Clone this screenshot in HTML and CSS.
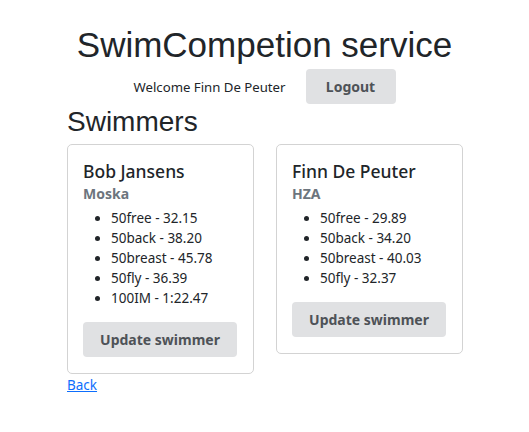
FILE: index.html
```html
<!DOCTYPE html>
<html>
<head>
<meta charset="utf-8">
<link rel="stylesheet" href="styles.css">
</head>
<body>
<div class="page">
  <h1 class="title">SwimCompetion service</h1>
  <div class="welcome">
    <span class="welcome-text">Welcome Finn De Peuter</span>
    <button class="btn">Logout</button>
  </div>
  <h2 class="section">Swimmers</h2>
  <div class="cards">
    <div class="card">
      <h3 class="card-title">Bob Jansens</h3>
      <div class="club">Moska</div>
      <ul class="times">
        <li>50free - 32.15</li>
        <li>50back - 38.20</li>
        <li>50breast - 45.78</li>
        <li>50fly - 36.39</li>
        <li>100IM - 1:22.47</li>
      </ul>
      <button class="btn btn-card">Update swimmer</button>
    </div>
    <div class="card">
      <h3 class="card-title">Finn De Peuter</h3>
      <div class="club">HZA</div>
      <ul class="times">
        <li>50free - 29.89</li>
        <li>50back - 34.20</li>
        <li>50breast - 40.03</li>
        <li>50fly - 32.37</li>
      </ul>
      <button class="btn btn-card">Update swimmer</button>
    </div>
  </div>
  <a class="back" href="#">Back</a>
</div>
</body>
</html>
```
FILE: styles.css
```css
html, body {
  margin: 0;
  padding: 0;
  background: #fff;
}
body {
  font-family: "Noto Sans", "Open Sans", sans-serif;
  font-size: 14px;
  color: #212529;
}
.page {
  padding: 24px 0 0 67px;
  width: 396px;
}
.title {
  font-family: "Liberation Sans", Arial, sans-serif;
  font-weight: 400;
  font-size: 35px;
  line-height: 42px;
  margin: 0;
  text-align: center;
  width: 529px;
  margin-left: -67px;
}
.welcome {
  display: flex;
  justify-content: center;
  align-items: center;
  gap: 20px;
  width: 529px;
  margin-left: -67px;
  margin-top: 3px;
}
.welcome-text {
  font-size: 13.2px;
}
.btn {
  font-family: "Noto Sans", "Open Sans", sans-serif;
  background: #e0e1e3;
  color: #4e5257;
  border: none;
  border-radius: 4px;
  font-weight: 700;
  font-size: 14px;
  height: 35px;
  padding: 0 20px;
  width: 90px;
}
.section {
  font-family: "Liberation Sans", Arial, sans-serif;
  font-weight: 400;
  font-size: 28px;
  line-height: 34px;
  margin: 1px 0 5px;
}
.cards {
  display: flex;
  align-items: flex-start;
  gap: 22px;
}
.card {
  width: 155px;
  border: 1px solid #d3d3d3;
  border-radius: 5px;
  padding: 14px 15px 16px 15px;
}
.card-title {
  font-size: 17.5px;
  font-weight: 500;
  margin: 0;
  line-height: 24px;
}
.club {
  color: #6c757d;
  font-weight: 700;
  font-size: 14px;
  line-height: 20px;
  margin-top: 1px;
}
.times {
  margin: 4px 0 14px;
  padding-left: 28px;
  font-size: 13.5px;
  line-height: 20px;
}
.btn-card {
  width: 154px;
  padding: 0;
}
.back {
  display: inline-block;
  margin-top: 2px;
  color: #0d6efd;
  font-size: 13.5px;
  line-height: 18px;
}
```
